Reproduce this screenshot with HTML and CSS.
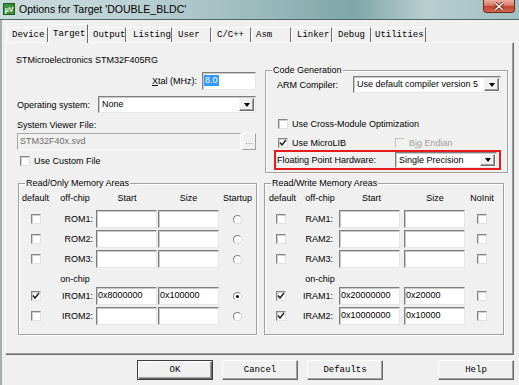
FILE: index.html
```html
<!DOCTYPE html>
<html>
	<head>
		<meta charset="utf-8">
		<title>Options for Target 'DOUBLE_BLDC'</title>
		<link rel="stylesheet" href="styles.css">
	</head>
	<body>
		<div class="titlebar">
			<svg class="appicon" width="12" height="12" viewBox="0 0 12 12">
				<rect x="0.5" y="0.5" width="11" height="11" fill="#3f8f3a" stroke="#1d5a1d"/>
				<text x="6" y="9" font-size="7" font-family="Liberation Sans" font-weight="bold" fill="#fff" text-anchor="middle">µV</text>
			</svg>
			<span class="title">Options for Target 'DOUBLE_BLDC'</span>
			<div class="close">
				<svg width="12" height="9" viewBox="0 0 12 9">
					<path d="M2 1L10 8M10 1L2 8" stroke="#6a2016" stroke-width="3"/>
					<path d="M2 1L10 8M10 1L2 8" stroke="#fff" stroke-width="1.6"/>
				</svg>
			</div>
		</div>
		<div class="client">
			<div class="tabs">
				<div class="tab">Device</div>
				<div class="tab on">Target</div>
				<div class="tab">Output</div>
				<div class="tab">Listing</div>
				<div class="tab">User</div>
				<div class="tab">C/C++</div>
				<div class="tab">Asm</div>
				<div class="tab">Linker</div>
				<div class="tab">Debug</div>
				<div class="tab">Utilities</div>
			</div>
			<div class="panel">
				<div class="top">
					<div class="lcol">
						<div class="devname">STMicroelectronics STM32F405RG</div>
						<div class="row xtal">
							<span><u>X</u>tal (MHz):</span>
							<div class="edit xtal-in"><span class="hilite">8.0</span></div>
						</div>
						<div class="row os">
							<span class="lbl">Operating system:</span>
							<div class="combo os-cb"><span class="val">None</span><span class="drop"></span></div>
						</div>
						<div class="svf-lbl">System Viewer File:</div>
						<div class="row svf">
							<div class="edit dis svf-in">STM32F40x.svd</div>
							<div class="dots">...</div>
						</div>
						<div class="check custom"><span class="cb"></span>Use Custom File</div>
					</div>
					<div class="rcol">
						<fieldset class="grp codegen">
							<legend>Code Generation</legend>
							<div class="cg-body">
								<div class="row arm">
									<span>ARM Compiler:</span>
									<div class="combo arm-cb"><span class="val">Use default compiler version 5</span><span class="drop"></span></div>
								</div>
								<div class="check cmo"><span class="cb"></span>Use Cross-Module Optimization</div>
								<div class="row libs">
									<div class="check mlib"><span class="cb"><svg width="8" height="8" viewBox="0 0 8 8"><path d="M1 3.5L3 6L7 1" fill="none" stroke="#222" stroke-width="1.5"/></svg></span>Use MicroLIB</div>
									<div class="check dis"><span class="cb"></span>B<u>i</u>g Endian</div>
								</div>
								<div class="row fpu">
									<span>Floating Point Hardware:</span>
									<div class="combo fpu-cb"><span class="val">Single Precision</span><span class="drop"></span></div>
								</div>
							</div>
						</fieldset>
					</div>
				</div>
				<div class="bottom">
					<fieldset class="grp mem ro">
						<legend>Read/Only Memory Areas</legend>
						<div class="memgrid">
							<span class="h def">default</span><span class="h">off-chip</span><span class="h">Start</span><span class="h">Size</span><span class="h">Startup</span>

							<span class="cbcell"><span class="cb"></span></span><span class="name">ROM1:</span><div class="edit"></div><div class="edit"></div><span class="mid"><span class="rb"></span></span>
							<span class="cbcell"><span class="cb"></span></span><span class="name">ROM2:</span><div class="edit"></div><div class="edit"></div><span class="mid"><span class="rb"></span></span>
							<span class="cbcell"><span class="cb"></span></span><span class="name">ROM3:</span><div class="edit"></div><div class="edit"></div><span class="mid"><span class="rb"></span></span>

							<span></span><span class="h onchip">on-chip</span><span></span><span></span><span></span>

							<span class="cbcell"><span class="cb"><svg width="8" height="8" viewBox="0 0 8 8"><path d="M1 3.5L3 6L7 1" fill="none" stroke="#222" stroke-width="1.5"/></svg></span></span><span class="name">IROM1:</span><div class="edit">0x8000000</div><div class="edit">0x100000</div><span class="mid"><span class="rb on"></span></span>
							<span class="cbcell"><span class="cb"></span></span><span class="name">IROM2:</span><div class="edit"></div><div class="edit"></div><span class="mid"><span class="rb"></span></span>
						</div>
					</fieldset>
					<fieldset class="grp mem rw">
						<legend>Read/Write Memory Areas</legend>
						<div class="memgrid">
							<span class="h def">default</span><span class="h">off-chip</span><span class="h">Start</span><span class="h">Size</span><span class="h">NoInit</span>

							<span class="cbcell"><span class="cb"></span></span><span class="name">RAM1:</span><div class="edit"></div><div class="edit"></div><span class="mid"><span class="cb"></span></span>
							<span class="cbcell"><span class="cb"></span></span><span class="name">RAM2:</span><div class="edit"></div><div class="edit"></div><span class="mid"><span class="cb"></span></span>
							<span class="cbcell"><span class="cb"></span></span><span class="name">RAM3:</span><div class="edit"></div><div class="edit"></div><span class="mid"><span class="cb"></span></span>

							<span></span><span class="h onchip">on-chip</span><span></span><span></span><span></span>

							<span class="cbcell"><span class="cb"><svg width="8" height="8" viewBox="0 0 8 8"><path d="M1 3.5L3 6L7 1" fill="none" stroke="#222" stroke-width="1.5"/></svg></span></span><span class="name">IRAM1:</span><div class="edit">0x20000000</div><div class="edit">0x20000</div><span class="mid"><span class="cb"></span></span>
							<span class="cbcell"><span class="cb"><svg width="8" height="8" viewBox="0 0 8 8"><path d="M1 3.5L3 6L7 1" fill="none" stroke="#222" stroke-width="1.5"/></svg></span></span><span class="name">IRAM2:</span><div class="edit">0x10000000</div><div class="edit">0x10000</div><span class="mid"><span class="cb"></span></span>
						</div>
					</fieldset>
				</div>
			</div>
			<div class="btns">
				<div class="btn def">OK</div>
				<div class="btn">Cancel</div>
				<div class="btn">Defaults</div>
				<div class="btn help">Help</div>
			</div>
		</div>
	</body>
</html>
```

FILE: styles.css
```css
* {
	margin: 0;
	padding: 0;
	box-sizing: border-box;
}

html,body{
	width: 519px;
	height: 385px;
	overflow: hidden;
	background: #f0f0f0;
}

body {
	font-family: "Liberation Sans", Arial, sans-serif;
	font-size: 9px;
	color: #000;
}

/* title bar */
.titlebar {
	height: 20px;
	display: flex;
	align-items: center;
	border-bottom: 1px solid #4f6668;
	background: linear-gradient(90deg, #cadbdd 0%, #bdd1d4 25%, #98b8ba 52%, #7fa5a6 68%, #b7cecf 82%, #a2bfc1 100%);
}

.appicon {
	margin-left: 3px;
	margin-top: -2px;
}

.title {
	margin-left: 4px;
	margin-top: -1px;
	font-size: 10.5px;
}

.close {
	margin-left: auto;
	margin-right: 4px;
	align-self: flex-start;
	width: 32px;
	height: 13px;
	display: flex;
	align-items: center;
	justify-content: center;
	border: 1px solid #6b2b22;
	border-top: none;
	border-radius: 0 0 4px 4px;
	background: linear-gradient(#eab0a2, #d87a64 45%, #c2432c 55%, #d5684f);
}

.client {
	height: 365px;
	border-left: 2px solid #a3aeaf;
}

/* tabs */
.tabs {
	height: 22px;
	display: flex;
	align-items: flex-end;
	margin-left: 4px;
	font-family: "Liberation Mono", "Courier New", monospace;
	font-size: 9px;
}

.tab {
	height: 15px;
	line-height: 14px;
	padding-left: 5px;
	white-space: nowrap;
	border-top: 1px solid #fff;
	border-left: 1px solid #fff;
	border-right: 1px solid #6d6d6d;
}
.tab:nth-child(1) { width: 42px; }
.tab:nth-child(2) { width: 40px; }
.tab:nth-child(3) { width: 38px; padding-left: 4px; }
.tab:nth-child(4) { width: 46px; padding-left: 6px; }
.tab:nth-child(5) { width: 39px; }
.tab:nth-child(6) { width: 40px; }
.tab:nth-child(7) { width: 40px; padding-left: 4px; }
.tab:nth-child(8) { width: 41px; }
.tab:nth-child(9) { width: 39px; }
.tab:nth-child(10) { width: 55px; padding-left: 3px; }

.tab.on {
	position: relative;
	z-index: 1;
	height: 19px;
	margin-bottom: -1px;
	padding-top: 2px;
	padding-left: 4px;
	background: #f0f0f0;
}

/* main panel */
.panel {
	margin-left: 3px;
	width: 509px;
	height: 313px;
	padding: 11px 7px 0 10px;
	border: 1px solid;
	border-color: #fff #6d6d6d #6d6d6d #fff;
	box-shadow: inset -1px -1px 0 #a0a0a0;
}

.top {
	display: flex;
	gap: 9px;
	height: 123px;
}

.lcol {
	width: 240px;
}

.rcol {
	width: 241px;
	padding-top: 10px;
}

.row {
	display: flex;
	align-items: center;
}

.devname {
	height: 12px;
	line-height: 12px;
}

.xtal {
	margin-top: 6px;
	height: 18px;
	justify-content: flex-end;
	gap: 5px;
}

.os {
	margin-top: 6px;
	height: 17px;
	padding-left: 1px;
	justify-content: space-between;
}

.svf-lbl {
	margin-top: 6px;
	height: 12px;
	line-height: 12px;
	padding-left: 1px;
}

.svf {
	margin-top: 2px;
	height: 17px;
	padding-left: 1px;
}

/* controls */
.edit {
	height: 18px;
	line-height: 14px;
	padding-left: 1px;
	background: #fff;
	border: 1px solid;
	border-color: #7f7f7f #e6e6e6 #e6e6e6 #7f7f7f;
	box-shadow: inset 1px 1px 0 #c9c9c9;
	white-space: nowrap;
	overflow: hidden;
}

.edit.dis {
	background: #f0f0f0;
	color: #6d6d6d;
	border-color: #a8a8a8 #fff #fff #a8a8a8;
	box-shadow: none;
	padding-left: 2px;
}

.xtal-in {
	width: 54px;
}

.hilite {
	display: inline-block;
	margin-top: 1px;
	line-height: 11px;
	padding: 0 1px;
	background: #3399ff;
	color: #fff;
}

.svf-in {
	width: 224px;
	height: 17px;
}

.dots {
	width: 14px;
	height: 17px;
	margin-left: 1px;
	color: #8d8d8d;
	text-align: center;
	line-height: 14px;
	border: 1px solid;
	border-color: #fff #a0a0a0 #a0a0a0 #fff;
}

.combo {
	display: flex;
	height: 17px;
	background: #fff;
	border: 1px solid;
	border-color: #7f7f7f #e6e6e6 #e6e6e6 #7f7f7f;
	box-shadow: inset 1px 1px 0 #c9c9c9;
}

.combo .val {
	flex: 1;
	padding-left: 3px;
	line-height: 14px;
	white-space: nowrap;
}

.drop {
	width: 15px;
	margin: 1px 1px 1px 0;
	display: flex;
	align-items: center;
	justify-content: center;
	background: #f0f0f0;
	border: 1px solid;
	border-color: #f4f4f4 #6d6d6d #6d6d6d #f4f4f4;
	box-shadow: inset -1px -1px 0 #a0a0a0;
}

.drop::after {
	content: "";
	border-left: 3.5px solid transparent;
	border-right: 3.5px solid transparent;
	border-top: 4px solid #000;
}

.os-cb {
	width: 158px;
}

.check {
	display: flex;
	align-items: center;
	height: 12px;
	white-space: nowrap;
}

.cb {
	display: inline-flex;
	align-items: center;
	justify-content: center;
	width: 10px;
	height: 10px;
	background: #fff;
	border: 1px solid;
	border-color: #858585 #e0e0e0 #e0e0e0 #858585;
	box-shadow: inset 1px 1px 0 #cfcfcf;
}

.check .cb {
	margin-right: 4px;
}

.check.dis {
	color: #a0a0a0;
}

.check.dis .cb {
	background: #f0f0f0;
	border-color: #c4c4c4 #f8f8f8 #f8f8f8 #c4c4c4;
	box-shadow: none;
}

.custom {
	margin-top: 5px;
	padding-left: 4px;
}

.rb {
	display: inline-flex;
	align-items: center;
	justify-content: center;
	width: 9px;
	height: 9px;
	border-radius: 50%;
	background: #fff;
	border: 1px solid;
	border-color: #858585 #dcdcdc #dcdcdc #858585;
}

.rb.on::after {
	content: "";
	width: 3px;
	height: 3px;
	border-radius: 50%;
	background: #000;
}

/* group boxes */
.grp {
	border: 1px solid #a0a0a0;
	box-shadow: 1px 1px 0 #fff, inset 1px 1px 0 #fff;
	padding: 0;
	margin: 0;
}

.grp legend {
	margin-left: 6px;
	padding: 0 1px;
	line-height: 12px;
}

.cg-body {
	padding: 0 6px 2px 11px;
}

.arm {
	height: 17px;
	justify-content: space-between;
}

.arm-cb {
	width: 148px;
}

.cmo {
	margin-top: 25px;
	padding-left: 1px;
}

.libs {
	margin-top: 7px;
	height: 12px;
}

.mlib {
	width: 118px;
	padding-left: 1px;
}

.fpu {
	margin: 1px 0 0 -3px;
	width: 227px;
	height: 20px;
	padding: 0 2px 0 1px;
	border: 2px solid #e61c1c;
	justify-content: space-between;
}

.fpu-cb {
	width: 102px;
	height: 16px;
}

.bottom {
	display: flex;
	gap: 7px;
	padding-left: 2px;
}

.ro {
	width: 239px;
}

.rw {
	width: 240px;
}

.memgrid {
	display: grid;
	grid-template-rows: 16px 18px 18px 18px 15px 18px 18px;
	row-gap: 2px;
	margin-top: 3px;
	padding-bottom: 9px;
	align-items: center;
}

.ro .memgrid {
	grid-template-columns: 32px 42px 62px 61px 37px;
	padding-left: 3px;
}

.rw .memgrid {
	grid-template-columns: 32px 38px 65px 62px 32px;
	padding-left: 4px;
}

.memgrid .edit {
	width: 61px;
}

.h {
	align-self: start;
	line-height: 12px;
	text-align: center;
	white-space: nowrap;
}

.h.def {
	text-align: left;
}

.h.onchip {
	align-self: end;
}

.cbcell {
	display: flex;
	padding-left: 9px;
}

.rw .cbcell {
	padding-left: 7px;
}

.name {
	text-align: right;
	padding-right: 3px;
	white-space: nowrap;
}

.rw .name {
	padding-right: 6px;
}

.mid {
	display: flex;
	justify-content: center;
}

/* buttons */
.btns {
	display: flex;
	gap: 9px;
	margin-top: 5px;
	padding-left: 135px;
}

.btn {
	width: 76px;
	height: 20px;
	display: flex;
	align-items: center;
	justify-content: center;
	font-family: "Liberation Mono", "Courier New", monospace;
	font-size: 9px;
	background: #f0f0f0;
	border: 1px solid;
	border-color: #fff #696969 #696969 #fff;
	box-shadow: inset -1px -1px 0 #a0a0a0;
}

.btn.def {
	border-color: #3c3c3c;
	box-shadow: inset 1px 1px 0 #fff, inset -1px -1px 0 #696969, inset -2px -2px 0 #a0a0a0;
}

.btn.help {
	margin-left: 46px;
}
```
